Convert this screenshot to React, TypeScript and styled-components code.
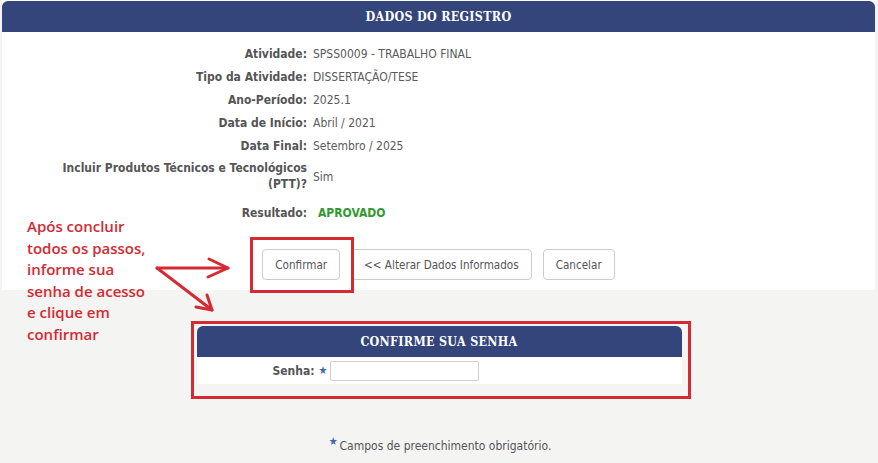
import React from "react";
import styled, { createGlobalStyle } from "styled-components";

const GlobalStyle = createGlobalStyle`
  html, body { margin: 0; padding: 0; background: #f4f4f2; }
  body { font-family: Tahoma, "DejaVu Sans Condensed", "Liberation Sans", sans-serif; }
`;

const Page = styled.div`
  position: relative;
  width: 878px;
  height: 463px;
  overflow: hidden;
  background: #f4f4f2;
`;

const Card = styled.section`
  margin: 0 3px 0 2px;
  background: #ffffff;
  padding-top: 1px;
  padding-bottom: 10px;
`;

const HeaderBar = styled.div`
  height: 31px;
  display: flex;
  align-items: center;
  justify-content: center;
  background: #34457c;
  border-radius: 6px 6px 0 0;
  color: #ffffff;
  font-family: "DejaVu Serif Condensed", "DejaVu Serif", "Liberation Serif", serif;
  font-weight: bold;
  font-size: 12.4px;
  letter-spacing: 0.3px;
`;

const DataGrid = styled.div`
  display: grid;
  grid-template-columns: 305px 1fr;
  column-gap: 6px;
  padding-top: 11px;
  font-size: 12px;
`;

const Label = styled.div<{ $tall?: boolean }>`
  text-align: right;
  font-weight: bold;
  color: #555555;
  line-height: ${(p) => (p.$tall ? "16px" : "23px")};
  padding: ${(p) => (p.$tall ? "2px 0 10px" : "0")};
`;

const Value = styled.div<{ $ok?: boolean }>`
  color: ${(p) => (p.$ok ? "#2f9a2f" : "#5a5a5a")};
  font-weight: ${(p) => (p.$ok ? "bold" : "normal")};
  padding-left: ${(p) => (p.$ok ? "5px" : "0")};
  line-height: 23px;
`;

const PttValue = styled(Value)`
  padding-top: 11px;
  line-height: 16px;
`;

const ButtonRow = styled.div`
  display: flex;
  justify-content: center;
  gap: 11px;
  margin-top: 24px;
`;

const Button = styled.button`
  height: 31px;
  padding: 0 12px;
  background: #ffffff;
  border: 1px solid #cccccc;
  border-radius: 4px;
  color: #555555;
  font-family: inherit;
  font-size: 11.6px;
`;

const PasswordPanel = styled.section`
  width: 485px;
  margin: 36px auto 0;
  background: #ffffff;
  border-radius: 6px 6px 0 0;
`;

const PanelBody = styled.div`
  display: flex;
  align-items: center;
  height: 27px;
  padding-left: 76px;
  font-size: 12px;
`;

const FieldLabel = styled.span`
  font-weight: bold;
  color: #555555;
`;

const Star = styled.span`
  color: #4468b0;
  font-size: 11px;
  margin: 0 3px 0 4px;
`;

const Input = styled.input`
  width: 149px;
  height: 20px;
  box-sizing: border-box;
  border: 1px solid #cfcfcf;
  border-radius: 2px;
  background: #fff;
`;

const Footer = styled.div`
  margin-top: 51px;
  text-align: center;
  font-size: 12px;
  color: #555555;
  padding-left: 2px;
`;

const FooterStar = styled.span`
  color: #4468b0;
  font-size: 11px;
  vertical-align: 5px;
  margin-right: 2px;
`;

const Annotation = styled.div`
  position: absolute;
  left: 27px;
  top: 216px;
  color: #d42a33;
  font-family: "Open Sans", "Noto Sans", sans-serif;
  font-weight: 600;
  font-size: 15px;
  line-height: 21.5px;
  white-space: nowrap;
`;

const RedBox = styled.div`
  position: absolute;
  border: 3px solid #d42a33;
  box-sizing: border-box;
  pointer-events: none;
`;

const Arrows = styled.svg`
  position: absolute;
  left: 0;
  top: 0;
  pointer-events: none;
`;

export default function App() {
  const rows: [string, string][] = [
    ["Atividade:", "SPSS0009 - TRABALHO FINAL"],
    ["Tipo da Atividade:", "DISSERTAÇÃO/TESE"],
    ["Ano-Período:", "2025.1"],
    ["Data de Início:", "Abril / 2021"],
    ["Data Final:", "Setembro / 2025"],
  ];
  return (
    <Page>
      <GlobalStyle />
      <Card>
        <HeaderBar>DADOS DO REGISTRO</HeaderBar>
        <DataGrid>
          {rows.map(([l, v]) => (
            <React.Fragment key={l}>
              <Label>{l}</Label>
              <Value>{v}</Value>
            </React.Fragment>
          ))}
          <Label $tall>
            Incluir Produtos Técnicos e Tecnológicos
            <br />
            (PTT)?
          </Label>
          <PttValue>Sim</PttValue>
          <Label>Resultado:</Label>
          <Value $ok>APROVADO</Value>
        </DataGrid>
        <ButtonRow>
          <Button>Confirmar</Button>
          <Button>&lt;&lt; Alterar Dados Informados</Button>
          <Button>Cancelar</Button>
        </ButtonRow>
      </Card>
      <PasswordPanel>
        <HeaderBar>CONFIRME SUA SENHA</HeaderBar>
        <PanelBody>
          <FieldLabel>Senha:</FieldLabel>
          <Star>★</Star>
          <Input type="password" />
        </PanelBody>
      </PasswordPanel>
      <Footer>
        <FooterStar>★</FooterStar>Campos de preenchimento obrigatório.
      </Footer>

      <Annotation>
        Após concluir
        <br />
        todos os passos,
        <br />
        informe sua
        <br />
        senha de acesso
        <br />
        e clique em
        <br />
        confirmar
      </Annotation>
      <RedBox style={{ left: 250, top: 237, width: 104, height: 56 }} />
      <RedBox style={{ left: 191, top: 321, width: 500, height: 78 }} />
      <Arrows width="878" height="463" viewBox="0 0 878 463">
        <g stroke="#d42a33" strokeWidth="3" fill="none" strokeLinecap="round" strokeLinejoin="round">
          <path d="M157 268 L228 268" />
          <path d="M209 259 L228 268 L208 277" />
          <path d="M157 268 L212 310" />
          <path d="M207 295 L212 310 L196 307" />
        </g>
      </Arrows>
    </Page>
  );
}
